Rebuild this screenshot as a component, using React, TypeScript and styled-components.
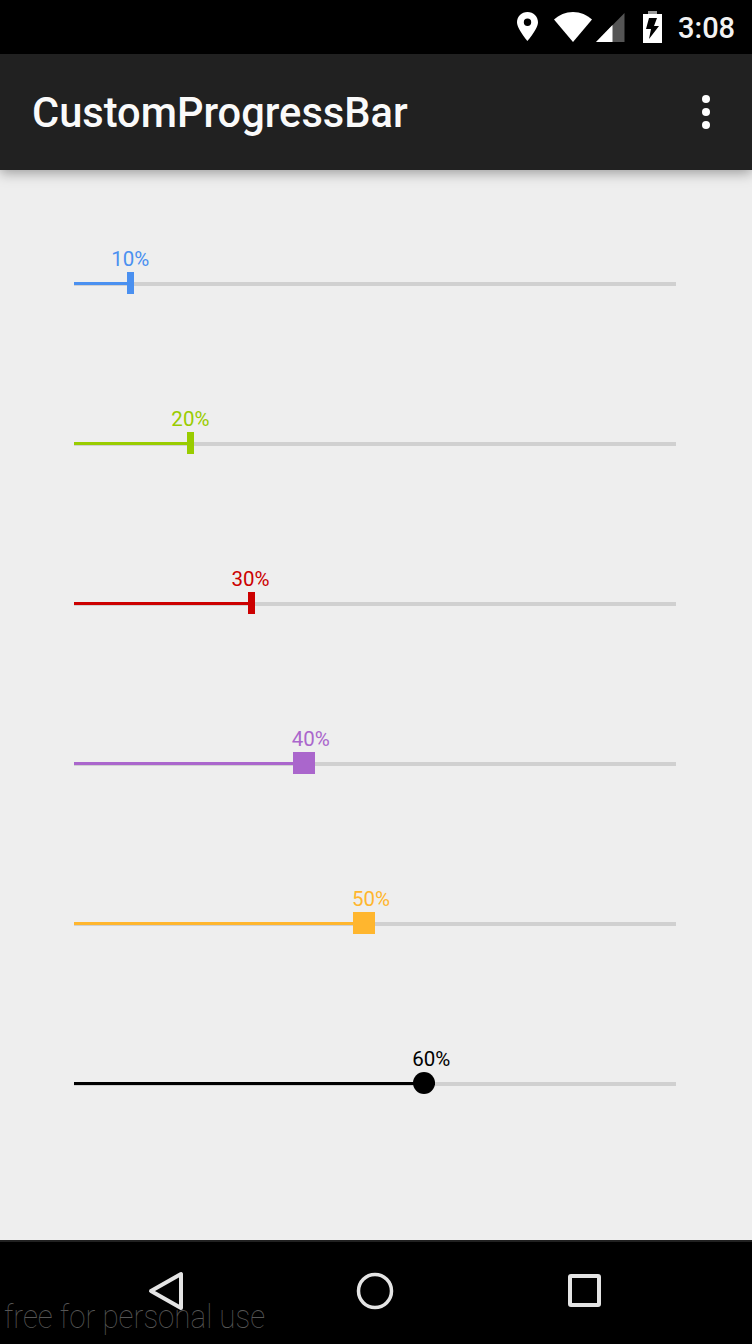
import * as React from 'react';
import styled, { createGlobalStyle } from 'styled-components';

const GlobalStyle = createGlobalStyle`
    html, body {
        margin: 0;
        padding: 0;
        background: #000;
    }
`;

const Screen = styled.div`
    position: relative;
    width: 752px;
    height: 1344px;
    display: flex;
    flex-direction: column;
    overflow: hidden;
    background: #eeeeee;
    font-family: Roboto, "Liberation Sans", sans-serif;
`;

const StatusBar = styled.div`
    height: 54px;
    flex: none;
    display: flex;
    align-items: center;
    justify-content: flex-end;
    padding-right: 18px;
    background: #000;
    color: #f2f2f2;
`;

const StatusIcons = styled.svg`
    width: 160px;
    height: 54px;
    flex: none;
`;

const Clock = styled.span`
    width: 56px;
    margin: 3px 0 0 8px;
    font-size: 29px;
    font-weight: 500;
    line-height: 51px;
    white-space: nowrap;
`;

const AppBar = styled.header`
    position: relative;
    z-index: 1;
    height: 116px;
    flex: none;
    display: flex;
    align-items: center;
    justify-content: space-between;
    padding: 0 42px 0 32px;
    background: #212121;
    box-shadow: 0 3px 12px rgba(0, 0, 0, 0.35);
`;

const Title = styled.h1`
    margin: 0;
    padding-top: 2px;
    color: #fafafa;
    font-size: 41.6px;
    font-weight: 500;
    line-height: 114px;
`;

const MoreDots = styled.div`
    display: flex;
    flex-direction: column;
    gap: 5px;
`;

const Dot = styled.span`
    width: 8px;
    height: 8px;
    border-radius: 50%;
    background: #fff;
`;

const SliderList = styled.main`
    flex: 1;
    padding: 34px 76px 0 74px;
`;

const SliderRow = styled.div`
    position: relative;
    height: 160px;
    display: flex;
    align-items: center;
`;

const Track = styled.div`
    position: relative;
    width: 100%;
    height: 4px;
    background: #d0d0d0;
`;

const Fill = styled.div<{ $color: string }>`
    height: 3px;
    background: ${(p) => p.$color};
`;

const Label = styled.span<{ $color: string }>`
    position: absolute;
    bottom: 15px;
    color: ${(p) => p.$color};
    font-size: 20.5px;
    line-height: 24px;
    transform: translateX(-50%);
`;

type ThumbShape = 'bar' | 'square' | 'circle';

const Thumb = styled.div<{ $color: string; $shape: ThumbShape }>`
    position: absolute;
    top: -10px;
    width: ${(p) => (p.$shape === 'bar' ? '7px' : '22px')};
    height: 22px;
    background: ${(p) => p.$color};
    border-radius: ${(p) => (p.$shape === 'circle' ? '50%' : '0')};
    transform: translateX(-100%);
`;

const NavBar = styled.nav`
    box-sizing: border-box;
    height: 104px;
    flex: none;
    background: #000;
    border-top: 2px solid #212121;
`;

const NavIcons = styled.svg`
    width: 752px;
    height: 102px;
    display: block;
`;

const Watermark = styled.div`
    position: absolute;
    left: 4px;
    bottom: 8px;
    color: #555555;
    font-size: 34px;
    font-weight: 100;
    line-height: 40px;
    white-space: nowrap;
    transform: scaleX(0.87);
    transform-origin: left center;
`;

type SliderData = {
    value: number;
    color: string;
    shape: ThumbShape;
};

const sliders: SliderData[] = [
    { value: 10, color: '#4a90f0', shape: 'bar' },
    { value: 20, color: '#99cc00', shape: 'bar' },
    { value: 30, color: '#cc0000', shape: 'bar' },
    { value: 40, color: '#aa66cc', shape: 'square' },
    { value: 50, color: '#ffb62e', shape: 'square' },
    { value: 60, color: '#000000', shape: 'circle' },
];

const Slider: React.FC<{ data: SliderData }> = ({ data }) => (
    <SliderRow>
        <Track>
            <Fill $color={data.color} style={{ width: `${data.value}%` }} />
            <Thumb $color={data.color} $shape={data.shape} style={{ left: `${data.value}%` }} />
            <Label $color={data.color} style={{ left: `calc(${data.value}% - 4px)` }}>
                {data.value}%
            </Label>
        </Track>
    </SliderRow>
);

const App: React.FC = () => (
    <Screen>
        <GlobalStyle />
        <StatusBar>
            <StatusIcons viewBox="510 0 160 54">
                {/* location pin */}
                <path
                    fillRule="evenodd"
                    fill="#fff"
                    d="M527.5 12c-6 0-10.500 4.600-10.500 10.300 0 6.600 10.500 18.700 10.500 18.700S538 28.900 538 22.300C538 16.600 533.500 12 527.500 12zM527.500 18.500a3.700 3.700 0 1 1 0 7.400 3.700 3.700 0 0 1 0-7.400z"
                />
                {/* wifi */}
                <path fill="#fff" d="M554 19.500C559 15 565.500 12 573 12s14 3 19 7.500L573 42z" />
                {/* signal */}
                <path fill="#555" d="M624.500 13v29H596z" />
                <path fill="#fff" d="M612.500 25v17H596z" />
                {/* battery */}
                <path fill="#999" d="M648 11h9v3h-9z" />
                <path fill="#fff" d="M643 14h19v29h-19z" />
                <path fill="#000" d="M649 18h8l-3 8h5l-10 13 2-10h-5z" />
            </StatusIcons>
            <Clock>3:08</Clock>
        </StatusBar>
        <AppBar>
            <Title>CustomProgressBar</Title>
            <MoreDots>
                <Dot />
                <Dot />
                <Dot />
            </MoreDots>
        </AppBar>
        <SliderList>
            {sliders.map((s) => (
                <Slider data={s} key={s.value} />
            ))}
        </SliderList>
        <NavBar>
            <NavIcons viewBox="0 1242 752 102" fill="none" stroke="#e4e4e4" strokeWidth="4">
                <path strokeLinejoin="round" d="M151 1291l30-17v34z" />
                <circle cx="375" cy="1291" r="16.500" strokeWidth="3.500" />
                <rect x="570" y="1276" width="29" height="29" rx="1" />
            </NavIcons>
        </NavBar>
        <Watermark>free for personal use</Watermark>
    </Screen>
);

export default App;
